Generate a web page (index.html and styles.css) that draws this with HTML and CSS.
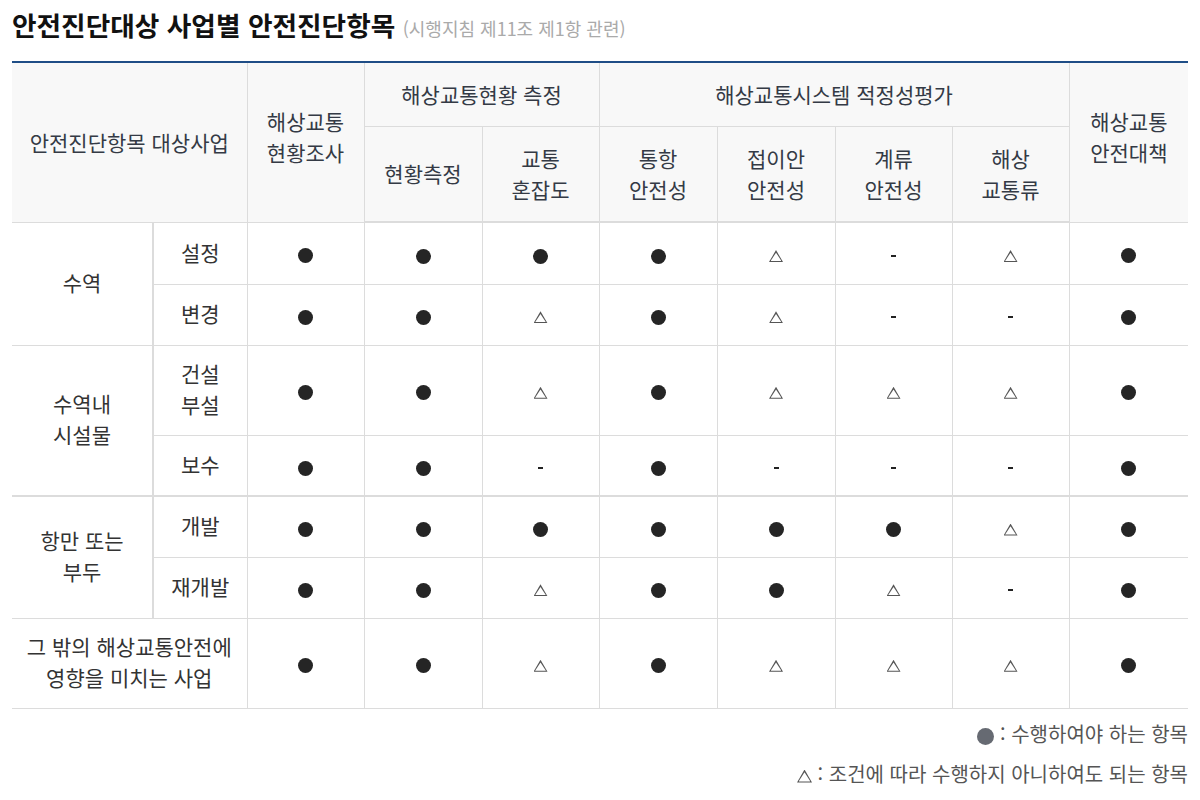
FILE: index.html
```html
<!DOCTYPE html>
<html lang="ko">
<head>
<meta charset="utf-8">
<title>안전진단대상 사업별 안전진단항목</title>
<link rel="stylesheet" href="styles.css">
</head>
<body>
<div class="page">
  <h1 class="title">안전진단대상 사업별 안전진단항목 <span class="sub">(시행지침 제11조 제1항 관련)</span></h1>
  <table class="grid">
    <colgroup>
      <col style="width:141px"><col style="width:94px"><col style="width:117px"><col style="width:118px"><col style="width:117px"><col style="width:118px"><col style="width:118px"><col style="width:117px"><col style="width:117px"><col style="width:119px">
    </colgroup>
    <thead>
      <tr class="h1">
        <th colspan="2" rowspan="2">안전진단항목 대상사업</th>
        <th rowspan="2" class="top">해상교통<br>현황조사</th>
        <th colspan="2">해상교통현황 측정</th>
        <th colspan="4">해상교통시스템 적정성평가</th>
        <th rowspan="2" class="top">해상교통<br>안전대책</th>
      </tr>
      <tr class="h2">
        <th>현황측정</th>
        <th>교통<br>혼잡도</th>
        <th>통항<br>안전성</th>
        <th>접이안<br>안전성</th>
        <th>계류<br>안전성</th>
        <th>해상<br>교통류</th>
      </tr>
    </thead>
    <tbody>
      <tr class="r62">
        <td rowspan="2" class="grp">수역</td>
        <td class="sub">설정</td>
        <td><i class="dot"></i></td><td><i class="dot"></i></td><td><i class="dot"></i></td><td><i class="dot"></i></td><td><i class="tri"></i></td><td><i class="dash"></i></td><td><i class="tri"></i></td><td><i class="dot"></i></td>
      </tr>
      <tr class="r61">
        <td class="sub">변경</td>
        <td><i class="dot"></i></td><td><i class="dot"></i></td><td><i class="tri"></i></td><td><i class="dot"></i></td><td><i class="tri"></i></td><td><i class="dash"></i></td><td><i class="dash"></i></td><td><i class="dot"></i></td>
      </tr>
      <tr class="r90">
        <td rowspan="2" class="grp">수역내<br>시설물</td>
        <td class="sub">건설<br>부설</td>
        <td><i class="dot"></i></td><td><i class="dot"></i></td><td><i class="tri"></i></td><td><i class="dot"></i></td><td><i class="tri"></i></td><td><i class="tri"></i></td><td><i class="tri"></i></td><td><i class="dot"></i></td>
      </tr>
      <tr class="r61">
        <td class="sub">보수</td>
        <td><i class="dot"></i></td><td><i class="dot"></i></td><td><i class="dash"></i></td><td><i class="dot"></i></td><td><i class="dash"></i></td><td><i class="dash"></i></td><td><i class="dash"></i></td><td><i class="dot"></i></td>
      </tr>
      <tr class="r61 thick">
        <td rowspan="2" class="grp">항만 또는<br>부두</td>
        <td class="sub">개발</td>
        <td><i class="dot"></i></td><td><i class="dot"></i></td><td><i class="dot"></i></td><td><i class="dot"></i></td><td><i class="dot"></i></td><td><i class="dot"></i></td><td><i class="tri"></i></td><td><i class="dot"></i></td>
      </tr>
      <tr class="r61">
        <td class="sub">재개발</td>
        <td><i class="dot"></i></td><td><i class="dot"></i></td><td><i class="tri"></i></td><td><i class="dot"></i></td><td><i class="dot"></i></td><td><i class="tri"></i></td><td><i class="dash"></i></td><td><i class="dot"></i></td>
      </tr>
      <tr class="r90">
        <td colspan="2" class="grp">그 밖의 해상교통안전에<br>영향을 미치는 사업</td>
        <td><i class="dot"></i></td><td><i class="dot"></i></td><td><i class="tri"></i></td><td><i class="dot"></i></td><td><i class="tri"></i></td><td><i class="tri"></i></td><td><i class="tri"></i></td><td><i class="dot"></i></td>
      </tr>
    </tbody>
  </table>
  <div class="legend">
    <p><i class="dot dot-legend"></i> : 수행하여야 하는 항목</p>
    <p><i class="tri tri-legend"></i> : 조건에 따라 수행하지 아니하여도 되는 항목</p>
  </div>
</div>
</body>
</html>
```

FILE: styles.css
```css
html, body {
  margin: 0;
  padding: 0;
  background: #fff;
}
body {
  font-family: "Noto Sans CJK KR", "Noto Sans", sans-serif;
  color: #333;
}
.page {
  padding: 0 12px;
}
.title {
  margin: 0;
  height: 61px;
  box-sizing: border-box;
  padding-top: 7px;
  font-size: 26.7px;
  line-height: 36px;
  font-weight: 700;
  color: #111;
  letter-spacing: 0;
}
.title .sub {
  font-size: 18px;
  font-weight: 400;
  color: #aaa;
  letter-spacing: 0;
}
.grid {
  width: 1176px;
  table-layout: fixed;
  border-collapse: collapse;
  border-top: 2px solid #1f4d86;
  font-size: 21px;
  line-height: 31px;
}
.grid th, .grid td {
  border: 1px solid #dcdcdc;
  padding: 0;
  text-align: center;
  vertical-align: middle;
  font-weight: 400;
  color: #333;
}
.grid tr > :first-child { border-left: none; }
.grid tr > :last-child { border-right: none; }
.grid thead th {
  background: #f8f8f8;
  color: #343a45;
}
.grid thead tr.h1 { height: 64px; }
.grid thead tr.h2 { height: 96px; }
.grid thead tr.h2 th { border-bottom: 2px solid #dcdcdc; }
.grid th.top { vertical-align: middle; padding-bottom: 10px; }
.grid tbody tr.r62 { height: 62px; }
.grid tbody tr.r61 { height: 61px; }
.grid tbody tr.r90 { height: 90px; }
.grid tbody tr.thick > td { border-top: 2px solid #dcdcdc; }
.grid td.grp {
  background: #fff;
  padding-bottom: 2px;
}
.grid td.sub {
  border-left: 2px solid #dcdcdc;
  padding-bottom: 2px;
}
.grid td.grp[colspan] { border-right: 1px solid #dcdcdc; }
.dot {
  display: inline-block;
  width: 15px;
  height: 15px;
  border-radius: 50%;
  background: #252525;
  vertical-align: middle;
}
.tri {
  display: inline-block;
  position: relative;
  width: 14px;
  height: 12px;
  vertical-align: middle;
  background: #555;
  clip-path: polygon(50% 0, 100% 100%, 0 100%);
}
.tri::after {
  content: "";
  position: absolute;
  left: 1.6px;
  right: 1.6px;
  top: 2.6px;
  bottom: 1px;
  background: #fff;
  clip-path: polygon(50% 0, 100% 100%, 0 100%);
}
.tri-legend {
  width: 15px;
  height: 13px;
}
.dash {
  display: inline-block;
  width: 5px;
  height: 2px;
  background: #222;
  vertical-align: middle;
}
.legend {
  text-align: right;
  padding-top: 5px;
  color: #555;
  font-size: 20px;
  line-height: 40px;
}
.legend p {
  margin: 0;
}
.legend .dot-legend {
  background: #666a72;
  width: 17px;
  height: 17px;
}
```
